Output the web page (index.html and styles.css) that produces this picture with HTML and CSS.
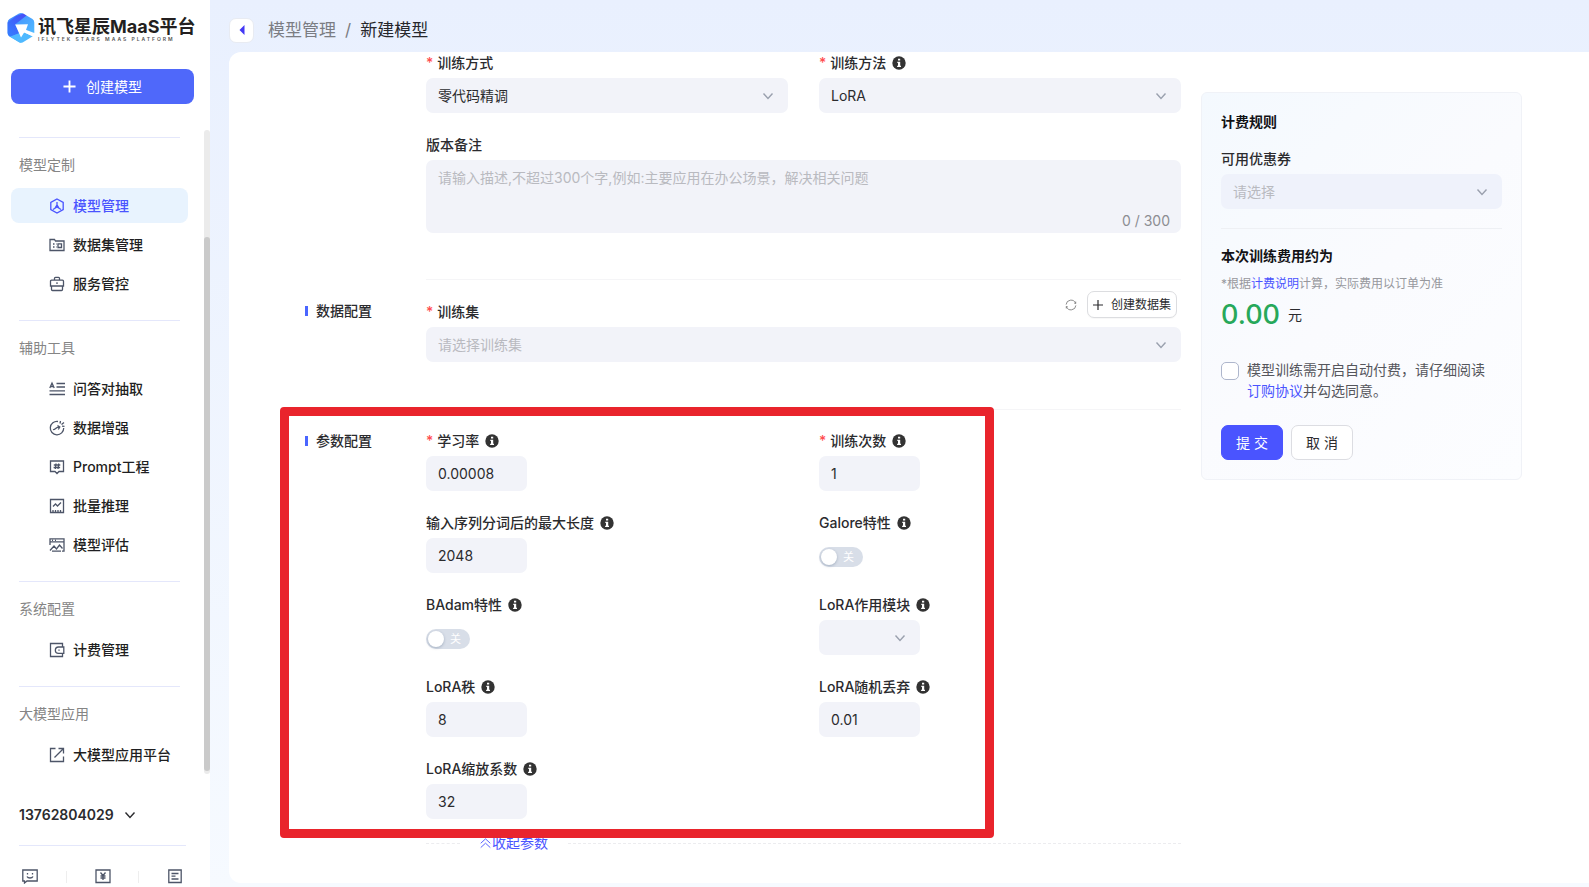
FILE: index.html
```html
<!DOCTYPE html>
<html lang="zh-CN">
<head>
<meta charset="utf-8">
<title>新建模型</title>
<link rel="stylesheet" href="styles.css">
</head>
<body>
<svg class="defs" aria-hidden="true">
  <symbol id="chev" viewBox="0 0 12 12"><path d="M1.5 3.5 6 8.5l4.500-5" /></symbol>
  <symbol id="info" viewBox="0 0 14 14"><circle class="solid" cx="7" cy="7" r="6.700"/><path class="knock" d="M6 2.800h2.200v1.700H6zM5.300 5.700h2.900v4h.8v1.200H5.100V9.700h.9V6.900h-.7z"/></symbol>
</svg>
<div class="app">
  <aside class="sidebar">
    <div class="brand">
      <svg class="brand-mark" viewBox="0 0 28 30">
        <defs>
          <linearGradient id="ga" x1="1" y1="0" x2="0" y2="1"><stop offset="0" stop-color="#4a3df5"/><stop offset="1" stop-color="#2f7bff"/></linearGradient>
          <linearGradient id="gb" x1="0" y1="0" x2="1" y2="1"><stop offset="0" stop-color="#3f86ff"/><stop offset="1" stop-color="#55c4ff"/></linearGradient>
        </defs>
        <path fill="url(#gb)" d="M12 .6a4 4 0 0 1 4 0l9.500 5.500A4 4 0 0 1 27.300 9.500v10.600L14 15 14 29.500a4 4 0 0 1-2-.6L2.500 23.500A4 4 0 0 1 .6 20V9.500a4 4 0 0 1 1.900-3.400z"/>
        <path fill="url(#ga)" d="M16 .6l3.500 2L8 11.500l4.500 9L3 23.800A4 4 0 0 1 .6 20V9.500L9 3z" opacity=".85"/>
        <path fill="#4fb9ff" d="M3 23.800 12.500 20l3.500-1 9.800 4.300L16 29.200a4 4 0 0 1-4 0z"/>
        <path fill="#fff" d="M8.200 11.500 21 11.300l-2.200 6.200 8.500 4.200-1.300 1.800-8.700-4.200-3.300 5.200z"/>
      </svg>
      <div class="brand-text">
        <span class="brand-name">讯飞星辰MaaS平台</span>
        <span class="brand-sub">IFLYTEK STARS MAAS PLATFORM</span>
      </div>
    </div>
    <button class="create" type="button"><svg class="plus" viewBox="0 0 14 14"><path d="M7 .5v13M.5 7h13"/></svg>创建模型</button>

    <div class="nav-wrap">
      <nav class="nav">
        <section class="group">
          <h2 class="group-title">模型定制</h2>
          <a class="item active" href="#"><svg class="ico" viewBox="0 0 16 16"><path d="M8 1 14.200 4.500v7L8 15l-6.200-3.500v-7zM8 4v5M8 9l-4 2.500M8 9l4 2.500M6 10.200 8 7l2 3.200"/></svg>模型管理</a>
          <a class="item" href="#"><svg class="ico" viewBox="0 0 16 16"><path d="M1 13.500v-11h4.500l1 1.500H15v9.500zM9 6.800h3.500v3.700H9zM4 7h1.500M4 10h1.500M7 7h.5M7 10h.5"/></svg>数据集管理</a>
          <a class="item" href="#"><svg class="ico" viewBox="0 0 16 16"><path d="M1.500 5.200a1 1 0 0 1 1-1h11a1 1 0 0 1 1 1V10h-13zM2.500 10v3.500a1 1 0 0 0 1 1h9a1 1 0 0 0 1-1V10M5.500 4V2.300a1 1 0 0 1 1-1h3a1 1 0 0 1 1 1V4M8 6.300v1.700"/></svg>服务管控</a>
        </section>
        <section class="group">
          <h2 class="group-title">辅助工具</h2>
          <a class="item" href="#"><svg class="ico" viewBox="0 0 16 16"><path d="M.8 7 3 2l2.200 5M1.800 5.500h2.500M7.500 2.500H16M7.500 6H16M.5 9.800H16M.5 13.500H16"/></svg>问答对抽取</a>
          <a class="item" href="#"><svg class="ico" viewBox="0 0 16 16"><path d="M9 1.500A6.700 6.700 0 1 0 14.700 8M4 9.500c2 .8 3-2.500 6-2.500M8.500 5.500 10.800 7l-1.500 2.500M11 3.500l.5-2.500M12.500 4.500 15 2.500M13 6.200l2.500.2"/></svg>数据增强</a>
          <a class="item" href="#"><svg class="ico" viewBox="0 0 16 16"><path d="M1.500 2h13v10.500H10L8 14.500 6 12.500H1.500zM7 4.500 6.300 10M9.700 4.500 9 10M4.800 6h6.500M4.600 8.500h6.500"/></svg>Prompt工程</a>
          <a class="item" href="#"><svg class="ico" viewBox="0 0 16 16"><path d="M1.500 1.500h13v13h-13zM4 8.500 6.500 6 8.500 8 12 4.500M4 12v2M6.500 12v2M9 12v2M11.500 12v2"/></svg>批量推理</a>
          <a class="item" href="#"><svg class="ico" viewBox="0 0 16 16"><path d="M1 8V1.800h14v12.400h-2M1 4.800h14M3 3.300h1M6 3.300h1M1 13.500l4-4.500 2.500 3L10.500 8l3 3.500M3 14.200h9"/></svg>模型评估</a>
        </section>
        <section class="group">
          <h2 class="group-title">系统配置</h2>
          <a class="item" href="#"><svg class="ico" viewBox="0 0 16 16"><path d="M13.500 4.500v-3h-12v13h12v-3M14.800 5H9.500a3 3 0 0 0 0 6.300h5.300zM10 7.500v1.300"/></svg>计费管理</a>
        </section>
        <section class="group">
          <h2 class="group-title">大模型应用</h2>
          <a class="item" href="#"><svg class="ico" viewBox="0 0 16 16"><path d="M6.500 1.500h-5v13h13v-5M9.500 1.500h5v5M14.300 1.700 5.500 10.500"/></svg>大模型应用平台</a>
        </section>
      </nav>
      <div class="track"><div class="thumb"></div></div>
    </div>

    <div class="account">
      <button class="user" type="button">13762804029<svg class="user-chev"><use href="#chev"/></svg></button>
      <div class="tools">
        <button class="tool" type="button" aria-label="反馈"><svg class="ico" viewBox="0 0 16 16"><path d="M.8 2h14.400v11H5l-2.500 2v-2H.8zM5.500 5v1.500M10.500 5v1.500M5 8.500c1 2 5 2 6 0"/></svg></button>
        <button class="tool" type="button" aria-label="费用"><svg class="ico" viewBox="0 0 16 16"><path d="M1 2h14v12.500H1zM5.500 4.500 8 7.500l2.500-3M8 7.500V12M5.500 8h5M5.500 10h5"/></svg></button>
        <button class="tool" type="button" aria-label="文档"><svg class="ico" viewBox="0 0 16 16"><path d="M1.800 2h12.400v12.500H1.800zM4.500 5.500h7M4.500 8.200h4M4.500 11h7"/></svg></button>
      </div>
    </div>
  </aside>

  <div class="page">
    <header class="crumbs">
      <button class="back" type="button" aria-label="返回"><svg class="back-ico" viewBox="0 0 6 10"><path d="M5.500 0v10L.5 5z"/></svg></button>
      <a class="crumb" href="#">模型管理</a><span class="slash">/</span><span class="here">新建模型</span>
    </header>

    <main class="card">
      <form class="form">
        <section class="block">
          <div class="block-body first">
            <div class="grid">
              <div class="field">
                <label class="label" for="mode"><i class="req">*</i>训练方式</label>
                <div class="select"><select class="control" id="mode"><option>零代码精调</option></select><svg class="arrow"><use href="#chev"/></svg></div>
              </div>
              <div class="field">
                <label class="label" for="method"><i class="req">*</i>训练方法<svg class="info"><use href="#info"/></svg></label>
                <div class="select"><select class="control" id="method"><option>LoRA</option></select><svg class="arrow"><use href="#chev"/></svg></div>
              </div>
              <div class="field wide">
                <label class="label" for="note">版本备注</label>
                <div class="area"><textarea class="control note" id="note" placeholder="请输入描述,不超过300个字,例如:主要应用在办公场景，解决相关问题"></textarea><span class="count">0 / 300</span></div>
              </div>
            </div>
          </div>
        </section>

        <section class="block">
          <h2 class="block-title">数据配置</h2>
          <div class="block-body data">
            <div class="data-head">
              <label class="label" for="dataset"><i class="req">*</i>训练集</label>
              <div class="data-tools">
                <button class="refresh" type="button" aria-label="刷新"><svg class="refresh-ico" viewBox="0 0 14 14"><path d="M1.300 6.500A5.700 5.700 0 0 1 12.300 5M12.700 7.500A5.700 5.700 0 0 1 1.700 9M12.500 3v2.200h-1.500M1.500 11V8.800H3"/></svg></button>
                <button class="small" type="button"><svg class="plus-sm" viewBox="0 0 10 10"><path d="M5 0v10M0 5h10"/></svg>创建数据集</button>
              </div>
            </div>
            <div class="select"><select class="control empty" id="dataset"><option>请选择训练集</option></select><svg class="arrow"><use href="#chev"/></svg></div>
          </div>
        </section>

        <section class="block params">
          <h2 class="block-title">参数配置</h2>
          <div class="block-body last">
            <div class="grid">
              <div class="field">
                <label class="label" for="lr"><i class="req">*</i>学习率<svg class="info"><use href="#info"/></svg></label>
                <input class="control short" id="lr" value="0.00008">
              </div>
              <div class="field">
                <label class="label" for="epochs"><i class="req">*</i>训练次数<svg class="info"><use href="#info"/></svg></label>
                <input class="control short" id="epochs" value="1">
              </div>
              <div class="field">
                <label class="label" for="maxlen">输入序列分词后的最大长度<svg class="info"><use href="#info"/></svg></label>
                <input class="control short" id="maxlen" value="2048">
              </div>
              <div class="field">
                <label class="label" for="galore">Galore特性<svg class="info"><use href="#info"/></svg></label>
                <div class="switch"><input class="switch-input" id="galore" type="checkbox" role="switch"><span class="switch-text">关</span></div>
              </div>
              <div class="field">
                <label class="label" for="badam">BAdam特性<svg class="info"><use href="#info"/></svg></label>
                <div class="switch"><input class="switch-input" id="badam" type="checkbox" role="switch"><span class="switch-text">关</span></div>
              </div>
              <div class="field">
                <label class="label" for="module">LoRA作用模块<svg class="info"><use href="#info"/></svg></label>
                <div class="select short"><select class="control" id="module"><option></option></select><svg class="arrow"><use href="#chev"/></svg></div>
              </div>
              <div class="field">
                <label class="label" for="rank">LoRA秩<svg class="info"><use href="#info"/></svg></label>
                <input class="control short" id="rank" value="8">
              </div>
              <div class="field">
                <label class="label" for="dropout">LoRA随机丢弃<svg class="info"><use href="#info"/></svg></label>
                <input class="control short" id="dropout" value="0.01">
              </div>
              <div class="field">
                <label class="label" for="alpha">LoRA缩放系数<svg class="info"><use href="#info"/></svg></label>
                <input class="control short" id="alpha" value="32">
              </div>
            </div>
            <div class="fold"><a class="fold-link" href="#"><svg class="fold-ico" viewBox="0 0 12 12"><path d="M.8 6.300 6 1.500l5.200 4.800M.8 11 6 6.200 11.200 11"/></svg>收起参数</a></div>
          </div>
          <div class="highlight"></div>
        </section>
      </form>

      <aside class="bill">
        <h2 class="bill-title">计费规则</h2>
        <label class="label coupon-label" for="coupon">可用优惠券</label>
        <div class="select"><select class="control empty tint" id="coupon"><option>请选择</option></select><svg class="arrow"><use href="#chev"/></svg></div>
        <hr class="rule">
        <h2 class="bill-title">本次训练费用约为</h2>
        <p class="hint">*根据<a class="link" href="#">计费说明</a>计算，实际费用以订单为准</p>
        <p class="price"><strong class="amount">0.00</strong>元</p>
        <div class="agree">
          <input class="tick" id="agree" type="checkbox">
          <label class="agree-text" for="agree">模型训练需开启自动付费，请仔细阅读<br><a class="link" href="#">订购协议</a>并勾选同意。</label>
        </div>
        <div class="actions">
          <button class="btn primary" type="button">提 交</button>
          <button class="btn" type="button">取 消</button>
        </div>
      </aside>
    </main>
  </div>
</div>
</body>
</html>
```
FILE: styles.css
```css
* { box-sizing: border-box; }

body {
  margin: 0;
  font: 14px/20px Inter, "Noto Sans CJK SC", sans-serif;
  color: #2b2b2e;
}

h2, p { margin: 0; }
button, input, select, textarea { font: inherit; color: inherit; }
button { cursor: pointer; padding: 0; }
a { text-decoration: none; color: inherit; }
svg { flex: none; fill: none; stroke: currentColor; }

.defs { position: absolute; width: 0; height: 0; }
.solid { fill: #333; stroke: none; }
.knock { fill: #fff; stroke: none; }

.app {
  display: flex;
  height: 100vh;
  overflow: hidden;
  background: linear-gradient(180deg, #e9f0fe, #f6faff);
}

/* Sidebar */
.sidebar {
  display: flex;
  flex-direction: column;
  flex: none;
  width: 210px;
  background: #fff;
}
.brand {
  display: flex;
  gap: 3px;
  height: 43px;
  padding: 13px 0 0 7px;
}
.brand-mark { width: 28px; height: 30px; stroke: none; }
.brand-text { display: flex; flex-direction: column; padding-top: 4px; }
.brand-name { font-size: 18px; line-height: 20px; font-weight: 700; color: #231f20; white-space: nowrap; }
.brand-sub { font-size: 5px; line-height: 5px; letter-spacing: 2px; font-weight: 600; color: #555; white-space: nowrap; }

.create {
  display: flex;
  align-items: center;
  justify-content: center;
  gap: 10px;
  height: 35px;
  margin: 26px 16px 26px 11px;
  border: 0;
  border-radius: 8px;
  background: #4f68fa;
  color: #fff;
}
.plus { width: 13px; height: 13px; stroke-width: 2; }

.nav-wrap { position: relative; flex: 1; min-height: 0; }
.nav { height: 100%; padding: 7px 22px 0 11px; overflow: hidden; }
.group { position: relative; padding: 17px 0 19px; }
.group::before {
  content: "";
  position: absolute;
  top: 0;
  left: 8px;
  right: 8px;
  height: 1px;
  background: #e4e7fb;
}
.group-title {
  margin: 0 8px 12px;
  font-size: 14px;
  line-height: 22px;
  font-weight: 400;
  color: #858585;
}
.item {
  display: flex;
  align-items: center;
  gap: 8px;
  height: 35px;
  padding-left: 38px;
  border-radius: 8px;
  font-weight: 500;
  color: #1f1f22;
  white-space: nowrap;
}
.item + .item { margin-top: 4px; }
.item .ico { color: #4d5568; }
.item.active, .item.active .ico { color: #4a54ff; }
.active { background: #e8f3fe; }
.ico { width: 16px; height: 16px; stroke-width: 1.3; }

.track {
  position: absolute;
  top: 0;
  bottom: 0;
  right: 0;
  width: 6px;
  padding: 107px 0 3px;
  border-radius: 3px;
  background: #ebebeb;
}
.thumb { height: 100%; border-radius: 3px; background: #cacaca; }

.account { padding: 31px 24px 3px 19px; }
.user {
  display: flex;
  align-items: center;
  gap: 10px;
  width: 100%;
  padding-bottom: 20px;
  border: 0;
  border-bottom: 1px solid #e4e7fb;
  background: none;
  font-size: 14px;
  line-height: 20px;
  font-weight: 600;
}
.user-chev { width: 12px; height: 12px; stroke-width: 1.4; }
.tools { display: flex; justify-content: space-between; padding: 22px 3px 0; }
.tool {
  display: flex;
  border: 0;
  background: none;
  color: #4d5568;
}
.tool + .tool::before {
  content: "";
  width: 1px;
  height: 12px;
  margin: 3px 28px 0 0;
  background: #eee;
}

/* Page */
.page { display: flex; flex-direction: column; flex: 1; min-width: 0; padding: 0 0 4px 19px; }
.crumbs {
  display: flex;
  align-items: center;
  height: 52px;
  flex: none;
  padding-top: 8px;
  font-size: 17px;
  color: #7b7d83;
}
.back {
  display: flex;
  align-items: center;
  justify-content: center;
  width: 25px;
  height: 25px;
  margin-right: 14px;
  border: 1px solid #e8ebf2;
  border-radius: 7px;
  background: #fff;
}
.back-ico { width: 6px; height: 10px; fill: #4338f5; stroke: none; }
.slash { margin: 0 9px; }
.here { color: #26272b; }

.card {
  display: flex;
  align-items: flex-start;
  gap: 20px;
  flex: 1;
  min-height: 0;
  padding: 1px 67px 0 76px;
  border-radius: 12px 0 0 12px;
  background: #fff;
  overflow: hidden;
}
.form { flex: 1; min-width: 0; }
.block { display: grid; grid-template-columns: 121px minmax(0, 1fr); position: relative; }
.block-title {
  display: flex;
  align-items: center;
  gap: 8px;
  align-self: start;
  padding-top: 21px;
  font-size: 14px;
  line-height: 20px;
  font-weight: 500;
}
.block-title::before { content: ""; width: 3px; height: 10px; background: #4a66ff; }
.block-body { grid-column: 2; border-bottom: 1px solid #f5f5f7; }
.first { padding-bottom: 46px; }
.data { padding: 11px 0 47px; }
.last { padding-top: 21px; border: 0; }

.grid { display: grid; grid-template-columns: 1fr 1fr; gap: 22px 31px; }
.wide { grid-column: 1 / -1; }
.label {
  display: flex;
  align-items: center;
  height: 20px;
  margin-bottom: 5px;
  font-weight: 500;
  white-space: nowrap;
}
.req { margin-right: 4px; font-style: normal; font-weight: 500; color: #ff4d4f; }
.info { width: 14px; height: 14px; margin-left: 6px; stroke: none; }

.control {
  display: block;
  width: 100%;
  height: 35px;
  padding: 0 12px;
  border: 0;
  border-radius: 7px;
  background: #f2f3f9;
  appearance: none;
  outline: 0;
}
.short { width: 101px; }
.select { position: relative; }
.arrow {
  position: absolute;
  top: 12px;
  right: 14px;
  width: 12px;
  height: 12px;
  color: #9aa0ae;
  stroke-width: 1.4;
  pointer-events: none;
}
.empty { color: #b9bac0; }
.area { position: relative; }
.note { height: 73px; padding: 8px 12px; resize: none; }
.note::placeholder { color: #b9bac0; }
.count { position: absolute; right: 11px; bottom: 2px; color: #8c8d92; }

.data-head { display: flex; justify-content: space-between; align-items: flex-end; height: 36px; }
.data-tools { display: flex; align-items: center; gap: 10px; align-self: flex-start; padding-right: 4px; }
.refresh { display: flex; border: 0; background: none; color: #777; }
.refresh-ico { width: 12px; height: 12px; }
.small {
  display: flex;
  align-items: center;
  gap: 8px;
  height: 27px;
  padding: 0 5px;
  border: 1px solid #dcdde0;
  border-radius: 7px;
  background: #fff;
  font-size: 12px;
  box-shadow: 0 1px 1px #00000008;
}
.plus-sm { width: 10px; height: 10px; stroke-width: 1.2; }

.switch { position: relative; width: 44px; height: 20px; margin-top: 14px; }
.switch-input {
  display: block;
  width: 44px;
  height: 20px;
  margin: 0;
  padding: 2px;
  border-radius: 10px;
  background: #d8dee8;
  appearance: none;
}
.switch-input::before {
  content: "";
  display: block;
  width: 16px;
  height: 16px;
  border-radius: 50%;
  background: #fff;
  box-shadow: 0 1px 3px #00234b40;
}
.switch-text { position: absolute; top: 0; right: 9px; font-size: 11px; color: #fff; pointer-events: none; }

.fold { display: flex; align-items: center; gap: 20px; padding-top: 14px; }
.fold::before, .fold::after { content: ""; width: 34px; border-top: 1px dashed #ececef; }
.fold::after { flex: 1; }
.fold-link { display: flex; align-items: center; gap: 1px; color: #4a54ff; }
.fold-ico { width: 11px; height: 12px; }

/* Marker frame drawn over the parameter block */
.highlight {
  position: absolute;
  top: -3px;
  bottom: 15px;
  left: -25px;
  width: 714px;
  border: 9px solid #e9242c;
  border-radius: 4px;
  pointer-events: none;
}

/* Billing panel */
.bill {
  flex: none;
  width: 321px;
  margin-top: 39px;
  padding: 19px 19px 19px;
  border: 1px solid #f0f2f7;
  border-radius: 6px;
  background: linear-gradient(135deg, #f4f9fe, #fafbfe 50%, #fcfdff);
}
.bill-title { font-size: 14px; line-height: 20px; font-weight: 600; color: #131316; }
.coupon-label { margin-top: 17px; }
.tint { background: #eff2fb; }
.rule { height: 1px; margin: 19px 0 17px; border: 0; background: #eef0f4; }
.hint { margin-top: 8px; font-size: 12px; line-height: 20px; color: #97989d; }
.link { color: #4a54ff; }
.price { display: flex; align-items: center; gap: 8px; margin-top: 6px; line-height: 30px; }
.amount { font-size: 27px; font-weight: 500; color: #27a85a; }
.agree { display: flex; gap: 8px; margin-top: 29px; }
.tick {
  flex: none;
  width: 18px;
  height: 18px;
  margin: 3px 0 0;
  border: 1px solid #aeb6cc;
  border-radius: 5px;
  background: #fff;
  appearance: none;
}
.agree-text { line-height: 21px; color: #55565c; white-space: nowrap; }
.actions { display: flex; gap: 8px; margin-top: 24px; }
.btn {
  width: 62px;
  height: 35px;
  border: 1px solid #dcdde2;
  border-radius: 7px;
  background: #fff;
}
.primary { border-color: #4a54ff; background: #4a54ff; color: #fff; }
```
